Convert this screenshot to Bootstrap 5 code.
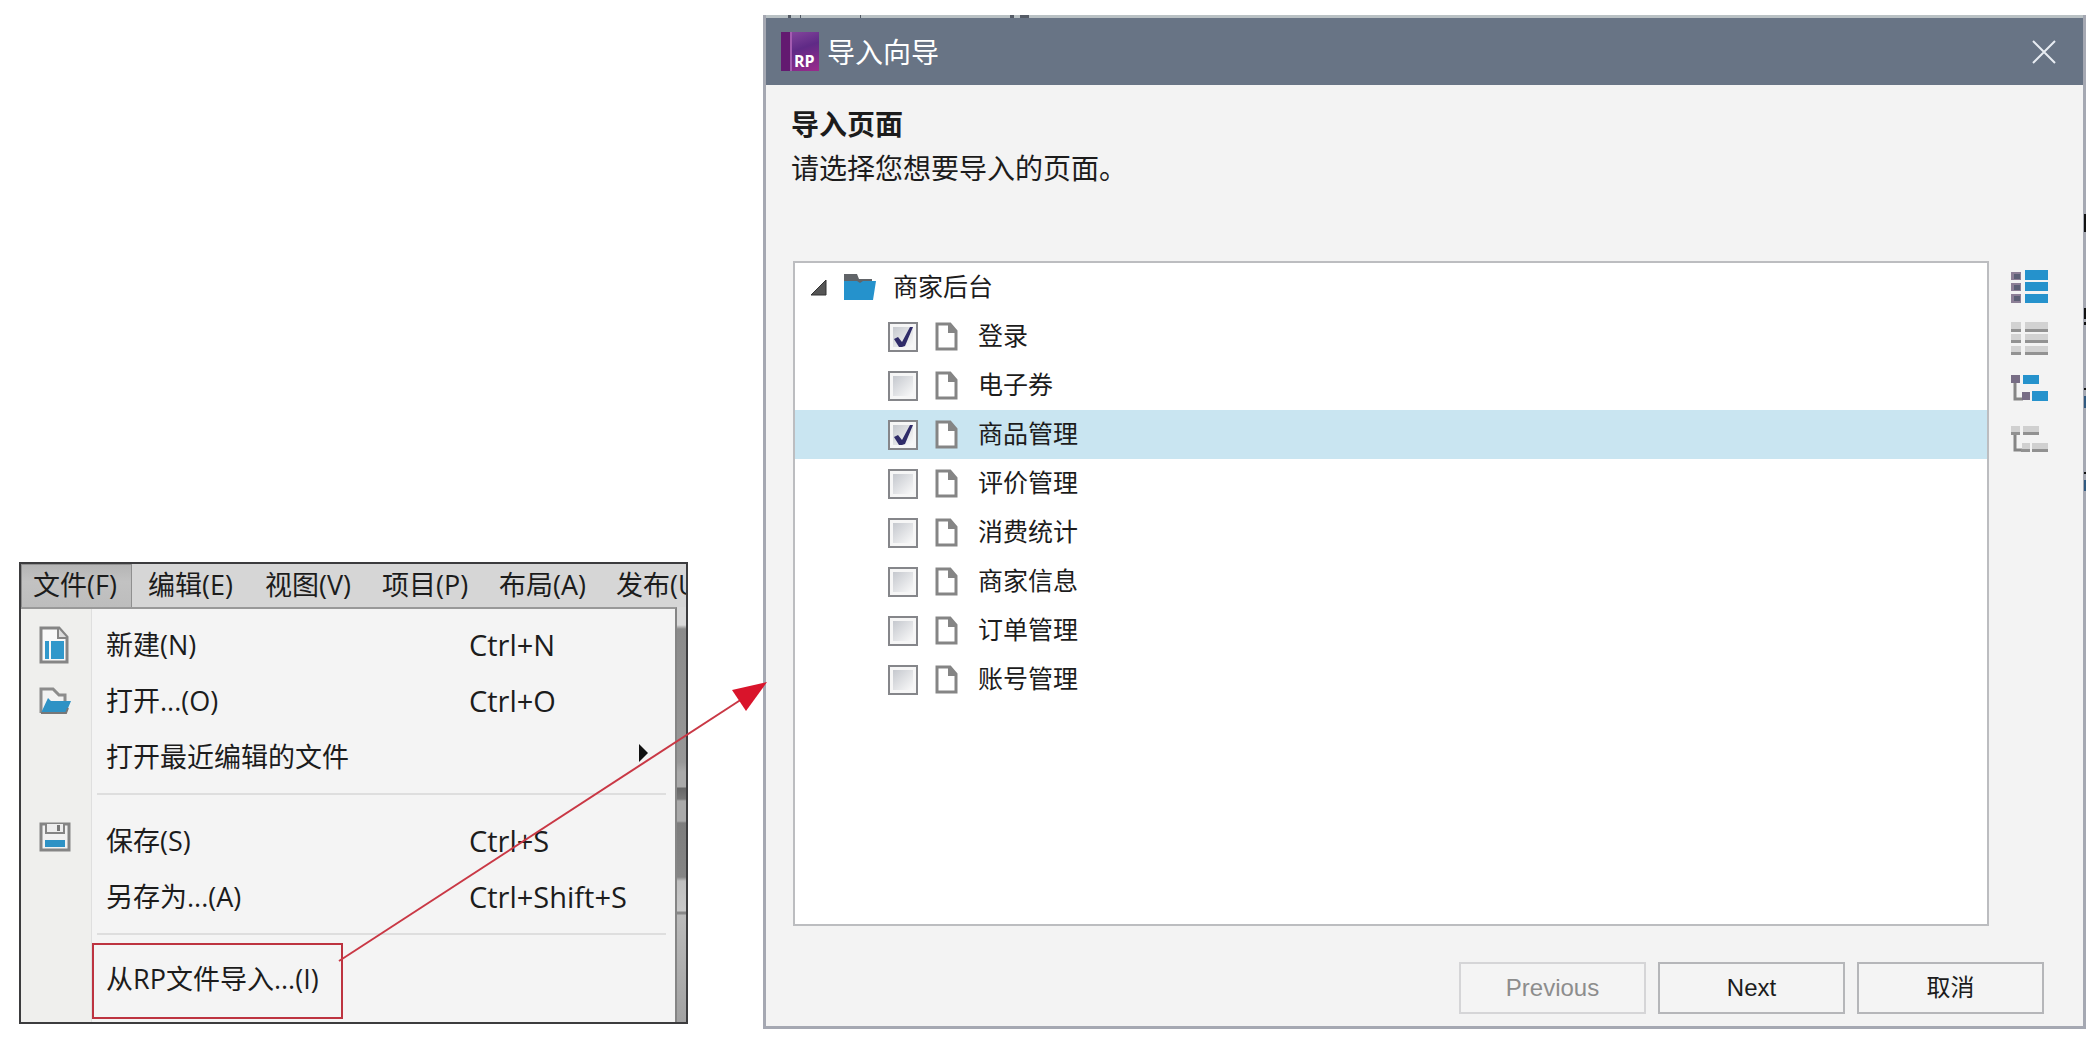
<!DOCTYPE html>
<html lang="zh-CN">
<head>
<meta charset="utf-8">
<meta name="viewport" content="width=device-width, initial-scale=1">
<title>导入向导</title>
<link href="https://cdn.jsdelivr.net/npm/bootstrap@5.3.0/dist/css/bootstrap.min.css" rel="stylesheet">
<script src="https://cdn.jsdelivr.net/npm/bootstrap@5.3.0/dist/js/bootstrap.bundle.min.js"></script>
<style>
  body { background: #fff; color: #1c1c1c; font-family: "Open Sans", "Noto Sans CJK SC", sans-serif; }
  button { font-family: inherit; color: inherit; }
  .stage { padding: 15px 12px 10px 19px; gap: 75px; }

  /* application menu */
  .app-menu { flex: 0 0 669px; min-width: 0; border: 2px solid #3c3c3e; background: #c9c9c9; font-size: 27px; line-height: 40px; margin-bottom: 5px; }
  .menu-strip { height: 43px; background: #d6d6d6; }
  .menu-strip button { flex: 0 0 auto; width: 117px; padding: 0 0 2px 15px; border: 0; background: none; text-align: left; white-space: nowrap; }
  .menu-strip button.opened { width: 111px; margin-right: 1px; padding-left: 11px; border: 1px solid #8f8f8f; border-bottom: 0; background: linear-gradient(#b5b5b5, #c2c2c2 40%, #bdbdbd); }
  .drop-panel { min-width: 0; background: linear-gradient(90deg, #efefed 70px, #dfdfdf 70px, #dfdfdf 71px, #f4f4f4 71px); border-top: 2px solid #999; border-right: 2px solid #858585; padding-top: 8px; }
  .entry { display: flex; align-items: center; width: 100%; height: 56px; border: 0; background: none; padding: 0 26px 0 18px; text-align: left; }
  .entry svg { flex: none; }
  .glyph-slot { flex: 0 0 67px; display: flex; }
  .keys { width: 180px; white-space: nowrap; font-size: 29px; }
  .divide { height: 2px; margin: 8px 9px 18px 76px; background: #dedede; }
  .divide-tight { margin: 8px 9px 8px 76px; }
  .boxed { width: 251px; height: 76px; margin-left: 71px; padding: 0 0 4px 12px; border: 2px solid #bd3340; white-space: nowrap; }
  .panel-end { height: 3px; }
  .side-strip { flex: 0 0 9px; background: linear-gradient(#d9d9d9 18px, #8b8b8b 22px, #989898 155px, #aaa 165px, #aaa 180px, #666 181px, #777 192px, #aaa 194px, #aaa 214px, #7d7d7d 216px, #858585 270px, #bfbfbf 274px, #c9c9c9 304px, #888 305px, #888 307px, #bbb 308px, #a2a2a2); }

  /* wizard */
  .wizard { min-width: 0; background: #f3f3f3; border: solid #a5a8b2; border-width: 0 3px 3px 3px; }
  .behind { height: 3px; background: #b9c1c4; }
  .wizard-title { height: 67px; background: #687485; color: #fff; font-size: 28px; padding: 0 27px 0 15px; }
  .wizard-title button { border: 0; background: none; padding: 0; line-height: 0; }
  .rp-mark { width: 38px; height: 39px; background: linear-gradient(90deg, #631a70 9px, #a35bb0 9px, #a35bb0 11px, transparent 11px), linear-gradient(160deg, #8a4aa0, #5f2a86 45%, #9b2a8c); color: #fff; font: 700 16px/16px "Open Sans", sans-serif; padding: 21px 0 0 13px; }
  .intro { padding: 17px 0 0 25px; font-size: 28px; line-height: 44px; height: 176px; }
  .tree-area { padding-left: 27px; gap: 22px; }
  .tree { flex: 1 1 auto; height: 665px; background: #fff; border: 2px solid #bcbdc0; font-size: 25px; line-height: 36px; }
  .branch { display: flex; align-items: center; height: 49px; margin: 0; }
  .branch label { padding-bottom: 4px; }
  .root { padding-left: 15px; }
  .leaf { padding-left: 93px; }
  .leaf svg { margin: 0 20px 0 17px; }
  .picked { background: #c9e5f1; }
  .branch input { appearance: none; width: 30px; height: 30px; margin: 0; border: 2px solid #85868a; background: linear-gradient(135deg, #c5c8ce, #fafafa) center / 20px 20px no-repeat #f6f6f6; }
  .branch input:checked { background-image: url("data:image/svg+xml,%3Csvg xmlns='http://www.w3.org/2000/svg' viewBox='0 0 26 26'%3E%3Cpath d='M4 15L8 13L12 18L20 3L23 3L15 22L12 23L9 23Z' fill='%23302c69'/%3E%3C/svg%3E"), linear-gradient(135deg, #c5c8ce, #fafafa); background-size: 26px 26px, 20px 20px; }
  .tools { flex: 0 0 72px; padding-top: 8px; gap: 16px; }
  .tools button { border: 0; background: none; padding: 0; width: 37px; height: 36px; line-height: 0; }
  .actions { padding: 36px 39px 12px 0; gap: 12px; font: 24px/32px "Liberation Sans", "Noto Sans CJK SC", sans-serif; }
  .actions button { width: 187px; height: 52px; border: 2px solid #b5b6b9; border-radius: 0; background: #f4f4f4; color: #1c1c1c; }
  .actions button:disabled { border-color: #d5d5d7; color: #8d8d8d; }
  .pointer { position: absolute; left: 0; top: 0; pointer-events: none; }
</style>
</head>
<body>
<main class="stage d-flex position-relative">

  <section class="app-menu align-self-end" aria-label="文件菜单">
    <nav class="menu-strip d-flex overflow-hidden">
      <button type="button" class="opened">文件(F)</button>
      <button type="button">编辑(E)</button>
      <button type="button">视图(V)</button>
      <button type="button">项目(P)</button>
      <button type="button">布局(A)</button>
      <button type="button">发布(U)</button>
    </nav>
    <div class="d-flex">
      <div class="drop-panel flex-grow-1">
        <button type="button" class="entry"><span class="glyph-slot">
          <svg width="30" height="38" viewBox="0 0 30 38"><path d="M2 2h18l8 9v25H2z" fill="#f8f8f8" stroke="#858585" stroke-width="3"/><path d="M19 2v10h9" fill="#ddd" stroke="#858585" stroke-width="2"/><path d="M6 15h4v18H6zM12 15h13v18H12z" fill="#3198cb"/></svg>
        </span><span class="flex-grow-1">新建(N)</span><span class="keys">Ctrl+N</span></button>
        <button type="button" class="entry"><span class="glyph-slot">
          <svg width="34" height="28" viewBox="0 0 34 28"><path d="M2 26V2h12l6 6h6v6" fill="#f2f2f2" stroke="#8c8c8c" stroke-width="3"/><path d="M9 11l3 3h20l-5 12H2z" fill="#2e92c5"/><path d="M2 26h25l2-5" fill="none" stroke="#777" stroke-width="2"/></svg>
        </span><span class="flex-grow-1">打开...(O)</span><span class="keys">Ctrl+O</span></button>
        <button type="button" class="entry"><span class="glyph-slot"></span><span class="flex-grow-1">打开最近编辑的文件</span>
          <svg class="mb-2" width="10" height="18" viewBox="0 0 10 18"><path d="M0 0l9 9-9 9z" fill="#111"/></svg></button>
        <div class="divide"></div>
        <button type="button" class="entry"><span class="glyph-slot">
          <svg class="mb-2" width="32" height="30" viewBox="0 0 32 30"><path d="M2 2h28v26H2z" fill="#f2f2f2" stroke="#858585" stroke-width="3"/><path d="M7 2v9h18V2" fill="#eee" stroke="#858585" stroke-width="2"/><path d="M18 3h3v6h-3z" fill="#777"/><path d="M6 18h20v7H6z" fill="#2e92c5"/></svg>
        </span><span class="flex-grow-1">保存(S)</span><span class="keys">Ctrl+S</span></button>
        <button type="button" class="entry"><span class="glyph-slot"></span><span class="flex-grow-1">另存为...(A)</span><span class="keys">Ctrl+Shift+S</span></button>
        <div class="divide divide-tight"></div>
        <button type="button" class="entry boxed">从RP文件导入...(I)</button>
        <div class="panel-end"></div>
      </div>
      <div class="side-strip"></div>
    </div>
  </section>

  <section class="wizard flex-grow-1" aria-label="导入向导">
    <div class="behind"></div>
    <header class="wizard-title d-flex align-items-center">
      <span class="rp-mark">RP</span>
      <span class="ms-2 flex-grow-1">导入向导</span>
      <button type="button" aria-label="关闭"><svg width="24" height="24" viewBox="0 0 24 24"><path d="M1 1l22 22M23 1L1 23" stroke="#e8edf3" stroke-width="2"/></svg></button>
    </header>
    <div class="intro">
      <div class="fw-bold">导入页面</div>
      <div>请选择您想要导入的页面。</div>
    </div>
    <div class="tree-area d-flex">
      <div class="tree">
        <div class="branch root">
          <svg width="17" height="17" viewBox="0 0 17 17"><path d="M16 1v15H1z" fill="#555" stroke="#333"/></svg>
          <svg class="mx-3" width="34" height="27" viewBox="0 0 34 27"><path d="M1 0h13l2 5h13v8H1z" fill="#616468"/><path d="M1 26V7h13l3 2 3-2h13l-3 19z" fill="#2592cc"/></svg>
          <span class="pb-1">商家后台</span>
        </div>
        <div class="branch leaf"><input type="checkbox" id="p1" checked><svg width="23" height="29" viewBox="0 0 23 29"><use href="#sheet"/></svg><label for="p1">登录</label></div>
        <div class="branch leaf"><input type="checkbox" id="p2"><svg width="23" height="29" viewBox="0 0 23 29"><use href="#sheet"/></svg><label for="p2">电子券</label></div>
        <div class="branch leaf picked"><input type="checkbox" id="p3" checked><svg width="23" height="29" viewBox="0 0 23 29"><use href="#sheet"/></svg><label for="p3">商品管理</label></div>
        <div class="branch leaf"><input type="checkbox" id="p4"><svg width="23" height="29" viewBox="0 0 23 29"><use href="#sheet"/></svg><label for="p4">评价管理</label></div>
        <div class="branch leaf"><input type="checkbox" id="p5"><svg width="23" height="29" viewBox="0 0 23 29"><use href="#sheet"/></svg><label for="p5">消费统计</label></div>
        <div class="branch leaf"><input type="checkbox" id="p6"><svg width="23" height="29" viewBox="0 0 23 29"><use href="#sheet"/></svg><label for="p6">商家信息</label></div>
        <div class="branch leaf"><input type="checkbox" id="p7"><svg width="23" height="29" viewBox="0 0 23 29"><use href="#sheet"/></svg><label for="p7">订单管理</label></div>
        <div class="branch leaf"><input type="checkbox" id="p8"><svg width="23" height="29" viewBox="0 0 23 29"><use href="#sheet"/></svg><label for="p8">账号管理</label></div>
      </div>
      <div class="tools d-flex flex-column">
        <button type="button" aria-label="全选"><svg width="37" height="34" viewBox="0 0 37 34"><path d="M0 2h10v8H0zM0 13h10v8H0zM0 24h10v9H0z" fill="#8c7f96"/><path d="M3 4h6v5H3zM3 15h6v5H3zM3 26h6v5H3z" fill="#5c5f75"/><path d="M14 0h23v10H14zM14 12h23v9H14zM14 24h23v9H14z" fill="#2592cc"/></svg></button>
        <button type="button" aria-label="全不选"><svg width="37" height="34" viewBox="0 0 37 34"><path d="M0 0h10v7H0zM14 0h23v7H14zM0 12h10v6H0zM14 12h23v6H14zM0 24h10v6H0zM14 24h23v6H14z" fill="#d2d2d2"/><path d="M0 7h10v3H0zM14 7h23v3H14zM0 18h10v3H0zM14 18h23v3H14zM0 30h10v3H0zM14 30h23v3H14z" fill="#929292"/></svg></button>
        <button type="button" aria-label="选择子页面"><svg width="37" height="34" viewBox="0 0 37 34"><path d="M4 6v19h8" fill="none" stroke="#858585" stroke-width="3"/><path d="M0 1h9v8H0zM11 18h8v8h-8z" fill="#776d85"/><path d="M12 1h16v9H12zM21 17h16v10H21z" fill="#2592cc"/></svg></button>
        <button type="button" aria-label="取消选择子页面"><svg width="37" height="34" viewBox="0 0 37 34"><path d="M4 7v17h8" fill="none" stroke="#858585" stroke-width="3"/><path d="M0 0h9v6H0zM12 0h16v6H12zM11 17h8v6h-8zM21 17h16v6H21z" fill="#d0d0d0"/><path d="M0 6h9v3H0zM12 6h16v3H12zM10 23h9v3h-9zM21 23h16v3H21z" fill="#919191"/></svg></button>
      </div>
    </div>
    <footer class="actions d-flex justify-content-end">
      <button type="button" disabled>Previous</button>
      <button type="button">Next</button>
      <button type="button">取消</button>
    </footer>
  </section>

  <svg class="pointer" width="2090" height="1038" viewBox="0 0 2090 1038" aria-hidden="true">
    <defs><g id="sheet"><path d="M2 2h13l6 7v18H2z" fill="#fff" stroke="#858585" stroke-width="3"/><path d="M13 2h2l6 7v2h-8z" fill="#858585"/></g></defs>
    <path d="M339 961L742 699" stroke="#c93845" stroke-width="2"/>
    <path d="M767 682l-35 8 14 21z" fill="#d9142b"/>
    <path d="M788 15h3v3h-3zM800 15h1v3h-1zM860 15h1v3h-1zM1010 15h4v3h-4zM1020 15h9v3h-9z" fill="#555c66"/>
    <path d="M2084 214h2v18h-2zM2084 308h2v11h-2zM2084 322h2v3h-2zM2084 388h2v2h-2zM2084 472h2v2h-2z" fill="#111"/>
    <path d="M2084 396h2v12h-2zM2084 480h2v11h-2z" fill="#315a80"/>
  </svg>
</main>
</body>
</html>
